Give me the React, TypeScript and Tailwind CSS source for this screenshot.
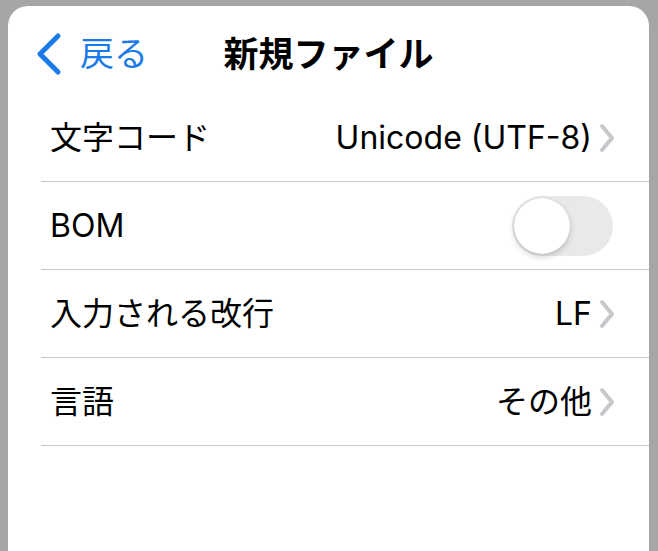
import React from "react";

const font = { fontFamily: 'Inter, "Noto Sans CJK JP", sans-serif' };

function Chevron() {
  return (
    <svg width="16" height="30" viewBox="0 0 16 30" className="shrink-0">
      <path d="M3 3 L13 15 L3 27" fill="none" stroke="#c7c7cc" strokeWidth="4" strokeLinecap="round" strokeLinejoin="round" />
    </svg>
  );
}

function Row({ label, children }: { label: string; children: React.ReactNode }) {
  return (
    <div className="ml-[33px] h-[88px] flex items-center justify-between border-b border-[#c8c7cc] pl-[9px] pr-[34px]">
      <span className="text-[32px] text-black leading-none">{label}</span>
      {children}
    </div>
  );
}

function Value({ text }: { text: string }) {
  return (
    <div className="flex items-center gap-[7px]">
      <span className="text-[32px] text-black leading-none">{text}</span>
      <Chevron />
    </div>
  );
}

export default function App() {
  return (
    <div className="w-[658px] h-[551px] bg-[#a6a6a6] pt-[6px] pl-[8px] pr-[9px] overflow-hidden" style={font}>
      <div className="bg-white rounded-t-[20px] h-[545px] w-[641px]">
        <div className="relative h-[88px] flex items-start justify-center pt-[31px]">
          <div className="absolute left-[26px] top-[26px] flex items-center">
            <svg width="30" height="44" viewBox="0 0 30 44">
              <path d="M24 4 L6 22 L24 40" fill="none" stroke="#1a7ae8" strokeWidth="5" strokeLinecap="round" strokeLinejoin="round" />
            </svg>
            <span className="ml-[16px] text-[34px] leading-none text-[#1a7ae8]">戻る</span>
          </div>
          <span className="text-[35px] font-bold leading-none text-black">新規ファイル</span>
        </div>
        <Row label="文字コード">
          <Value text="Unicode (UTF-8)" />
        </Row>
        <Row label="BOM">
          <div className="relative w-[101px] h-[60px] rounded-full bg-[#e9e9eb] mr-[2px]">
            <div className="absolute left-[2px] top-[2px] w-[56px] h-[56px] rounded-full bg-white shadow-[0_3px_6px_rgba(0,0,0,0.18),0_0_1px_rgba(0,0,0,0.2)]" />
          </div>
        </Row>
        <Row label="入力される改行">
          <Value text="LF" />
        </Row>
        <Row label="言語">
          <Value text="その他" />
        </Row>
      </div>
    </div>
  );
}
